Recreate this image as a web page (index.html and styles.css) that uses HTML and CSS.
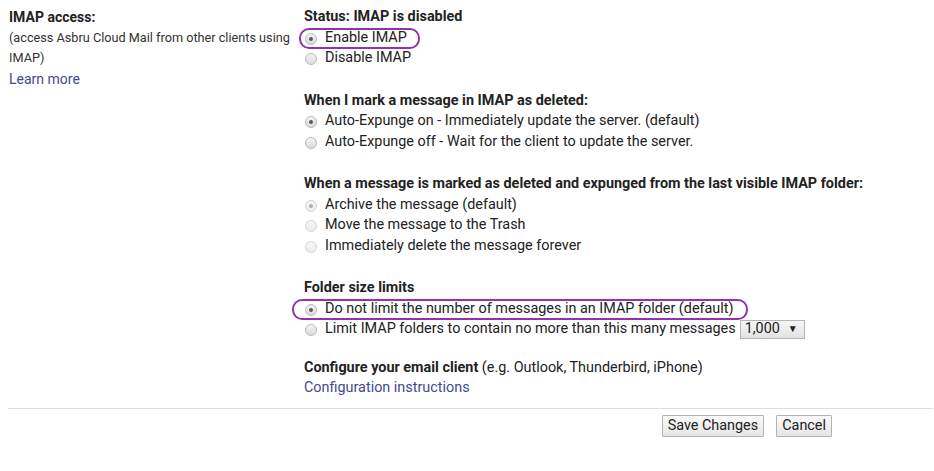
FILE: index.html
```html
<!DOCTYPE html>
<html>
<head>
<meta charset="utf-8">
<link rel="stylesheet" href="styles.css">
</head>
<body>
<div class="page">
  <div class="settings">
    <div class="label-col">
      <div class="title">IMAP access:</div>
      <div class="desc">(access Asbru Cloud Mail from other clients using IMAP)</div>
      <a class="link" href="#">Learn more</a>
    </div>
    <div class="opts-col">
      <div class="group">
        <div class="heading">Status: IMAP is disabled</div>
        <div class="row"><span class="opt hl hl-a"><span class="radio checked"></span>Enable IMAP</span></div>
        <div class="row"><span class="opt"><span class="radio"></span>Disable IMAP</span></div>
      </div>
      <div class="group">
        <div class="heading">When I mark a message in IMAP as deleted:</div>
        <div class="row"><span class="opt"><span class="radio checked"></span>Auto-Expunge on - Immediately update the server. (default)</span></div>
        <div class="row"><span class="opt"><span class="radio"></span>Auto-Expunge off - Wait for the client to update the server.</span></div>
      </div>
      <div class="group">
        <div class="heading">When a message is marked as deleted and expunged from the last visible IMAP folder:</div>
        <div class="row"><span class="opt"><span class="radio checked disabled"></span>Archive the message (default)</span></div>
        <div class="row"><span class="opt"><span class="radio disabled"></span>Move the message to the Trash</span></div>
        <div class="row"><span class="opt"><span class="radio disabled"></span>Immediately delete the message forever</span></div>
      </div>
      <div class="group group-tight">
        <div class="heading">Folder size limits</div>
        <div class="row"><span class="opt hl hl-b"><span class="radio checked"></span>Do not limit the number of messages in an IMAP folder (default)</span></div>
        <div class="row"><span class="opt"><span class="radio"></span>Limit IMAP folders to contain no more than this many messages</span><span class="select">1,000<span class="arrow">▼</span></span></div>
      </div>
      <div class="group group-last">
        <div><span class="heading-inline">Configure your email client</span> (e.g. Outlook, Thunderbird, iPhone)</div>
        <a class="link" href="#">Configuration instructions</a>
      </div>
    </div>
  </div>
  <div class="divider"></div>
  <div class="actions">
    <button class="btn">Save Changes</button>
    <button class="btn">Cancel</button>
  </div>
</div>
</body>
</html>
```

FILE: styles.css
```css
html, body {
  margin: 0;
  padding: 0;
  background: #fff;
}
body {
  font-family: Roboto, "Liberation Sans", Arial, sans-serif;
  font-size: 14.4px;
  line-height: 20.5px;
  color: #222;
}
.page {
  padding-top: 7px;
}
.settings {
  display: grid;
  grid-template-columns: 304px 1fr;
}
.label-col {
  padding-left: 9px;
}
.label-col .title {
  font-size: 14px;
}
.label-col .desc {
  width: 290px;
  font-size: 12.7px;
  color: #333;
}
.title, .heading, .heading-inline {
  font-weight: bold;
}
.link {
  color: #46488f;
  text-decoration: none;
}
.label-col .link {
  font-size: 14px;
}
.group {
  margin-bottom: 22px;
}
.group-tight {
  margin-bottom: 18px;
}
.group-last {
  margin-bottom: 9px;
}
.row {
  display: flex;
  align-items: center;
  height: 20.5px;
}
.opt {
  display: inline-flex;
  align-items: center;
  position: relative;
  padding-left: 1px;
}
.radio {
  display: inline-block;
  box-sizing: border-box;
  width: 12px;
  height: 12px;
  border-radius: 50%;
  border: 1px solid #b9b9b9;
  background: linear-gradient(#f4f4f4, #dcdcdc);
  margin-right: 8px;
  position: relative;
  top: 1px;
}
.radio.checked::after {
  content: "";
  position: absolute;
  left: 3px;
  top: 3px;
  width: 4px;
  height: 4px;
  border-radius: 50%;
  background: #5a5a5a;
}
.radio.disabled {
  border-color: #d6d6d6;
  background: linear-gradient(#f7f7f7, #ececec);
}
.radio.disabled.checked::after {
  background: #b0b0b0;
}
.hl::after {
  content: "";
  position: absolute;
  border: 2px solid #9530b0;
  border-radius: 10px;
  top: 0;
  bottom: -1px;
  box-sizing: border-box;
}
.hl-a::after {
  left: -5px;
  right: -13px;
}
.hl-b::after {
  left: -12px;
  right: -14px;
}
.select {
  display: inline-flex;
  align-items: center;
  justify-content: space-between;
  box-sizing: border-box;
  width: 65px;
  height: 19px;
  margin-left: 4px;
  padding: 0 6px 0 4px;
  border: 1px solid #b5b5b5;
  background: linear-gradient(#f6f6f6, #e2e2e2);
  font-size: 14.4px;
}
.arrow {
  font-size: 10px;
  line-height: 1;
  color: #222;
}
.divider {
  margin: 0 1px 0 8px;
  height: 1px;
  background: #dedede;
}
.actions {
  display: flex;
  justify-content: flex-end;
  gap: 12px;
  padding-right: 102px;
  margin-top: 6px;
}
.btn {
  font-family: Roboto, "Liberation Sans", Arial, sans-serif;
  font-size: 14.4px;
  color: #222;
  height: 22px;
  padding: 0 5px;
  border: 1px solid #b3b3b3;
  border-radius: 1px;
  background: linear-gradient(#fafafa, #e6e6e6);
  line-height: 20px;
}
```
